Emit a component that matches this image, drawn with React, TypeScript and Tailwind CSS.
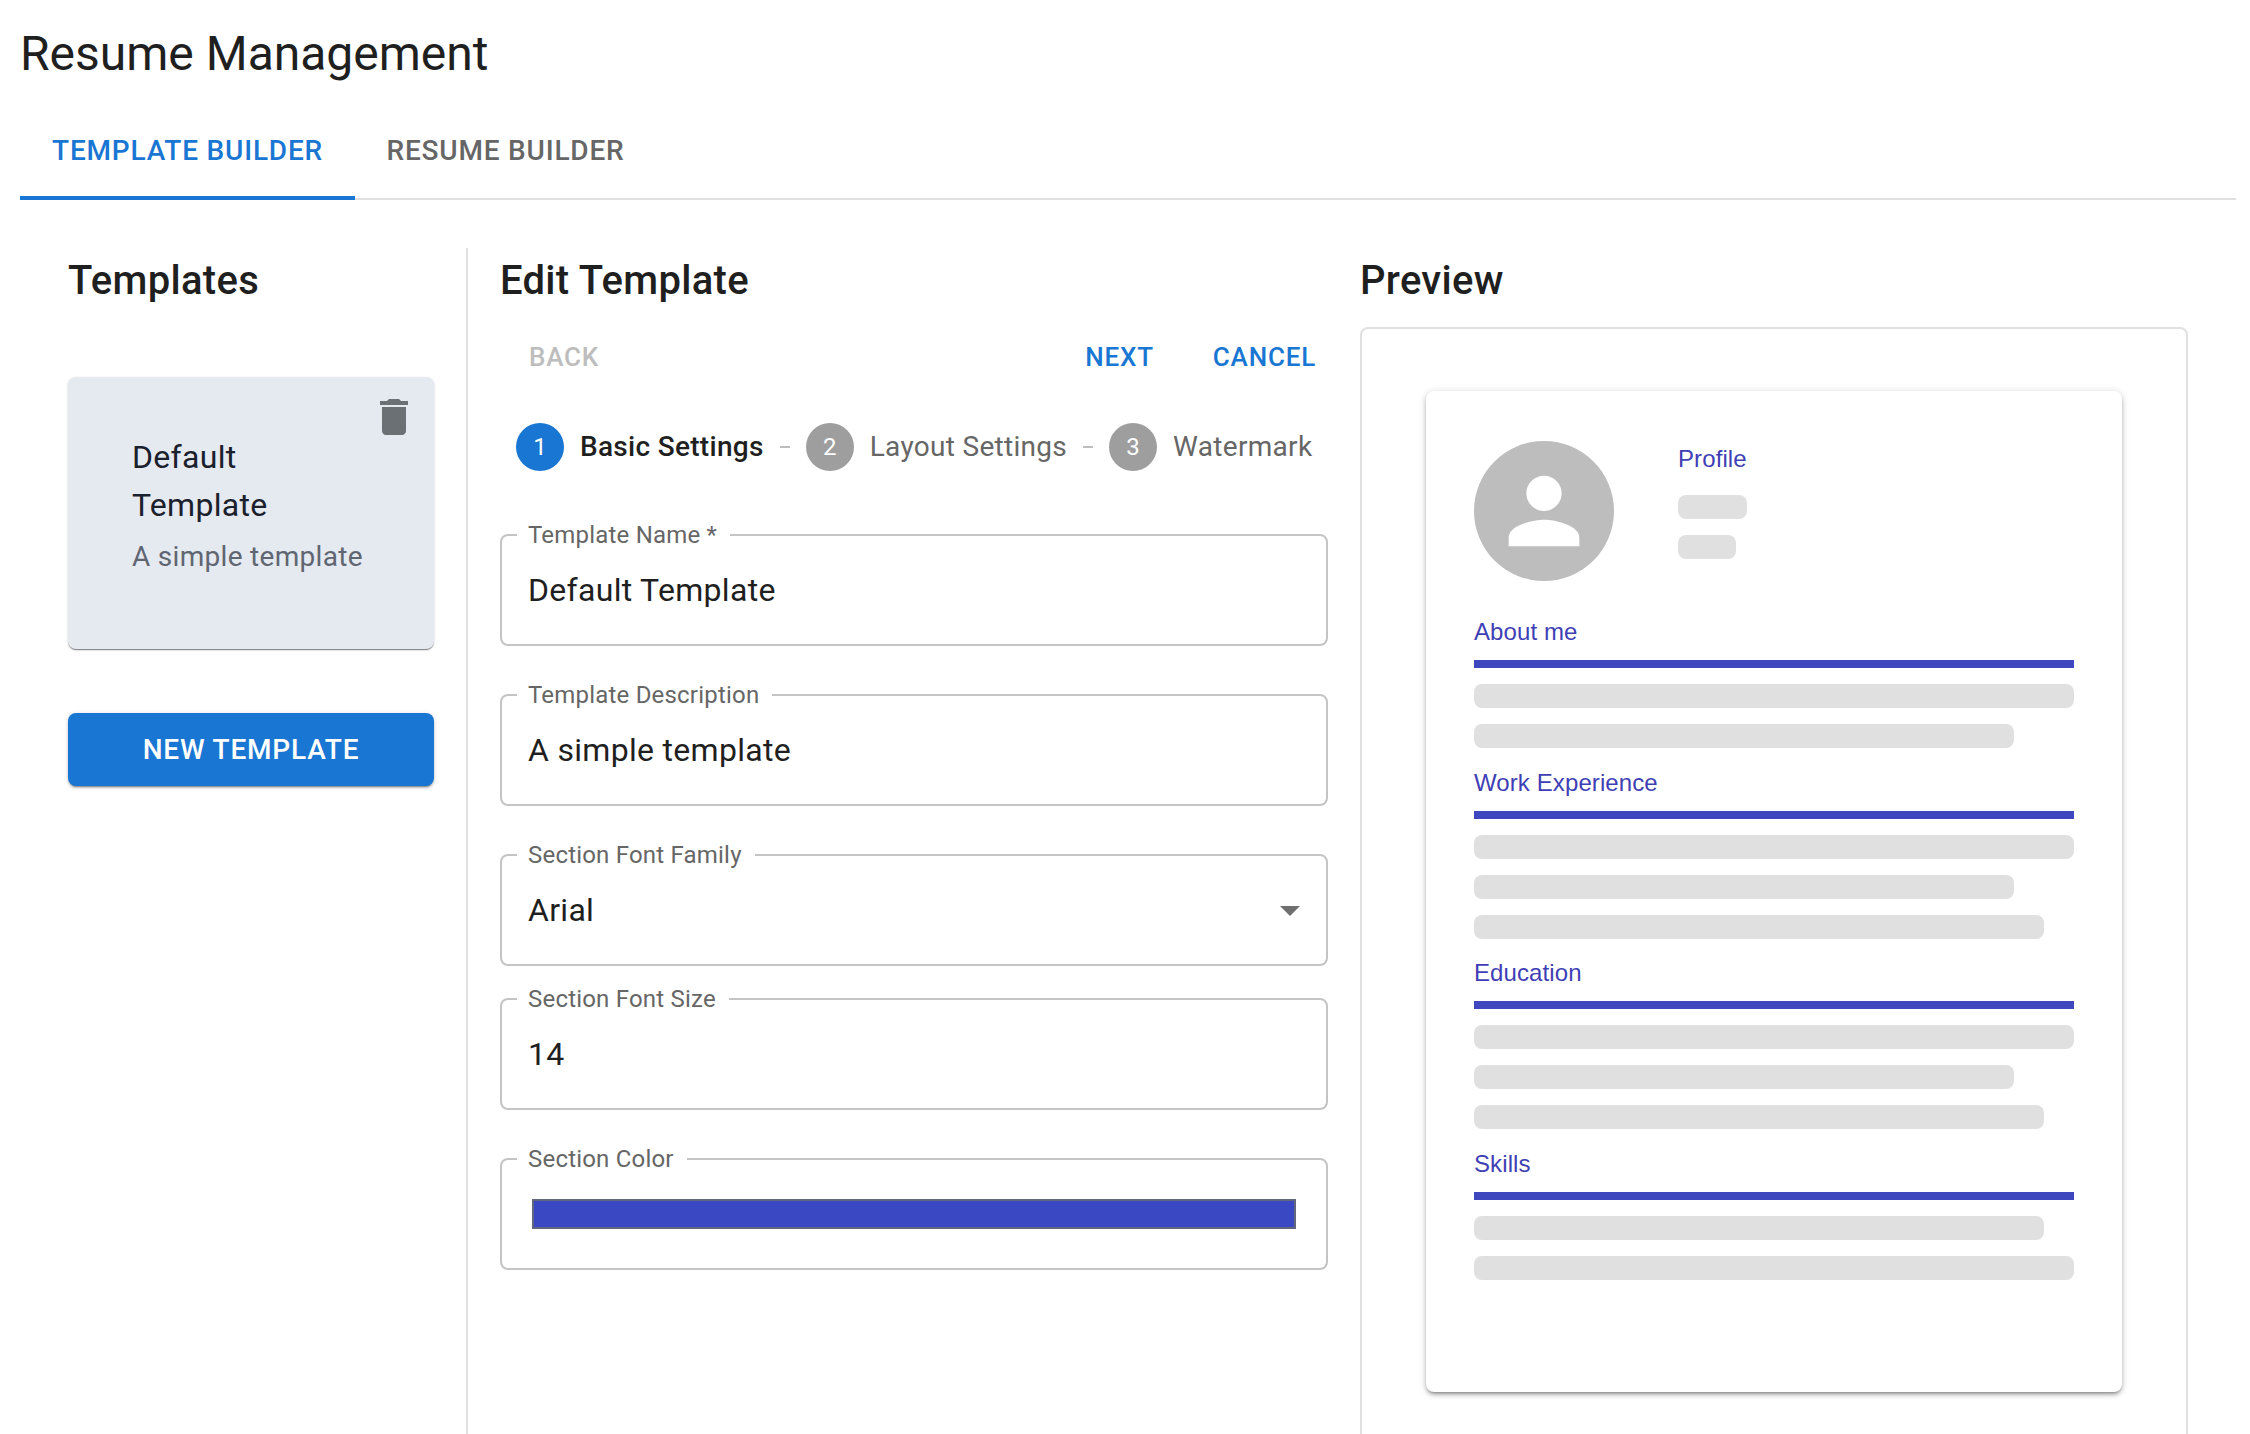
function Field({ label, children }: { label: string; children: React.ReactNode }) {
  return (
    <div className="relative h-[112px] rounded-lg border-2 border-[#c4c4c4] flex items-center pl-[26px] pr-[25px] text-[32px] tracking-[0.3px] text-[#1f1f1f]">
      <span className="absolute -top-[15px] left-[15px] h-7 bg-white pl-[11px] pr-[13px] text-[24px] leading-7 tracking-[0.2px] text-[#666666]">
        {label}
      </span>
      {children}
    </div>
  );
}

function Skeleton({ className }: { className: string }) {
  return <div className={`h-6 rounded-lg bg-[#e0e0e0] ${className}`} />;
}

function Section({ title, lines }: { title: string; lines: string[] }) {
  return (
    <div className="flex flex-col">
      <div className="h-7 text-[24px] leading-7 tracking-[0.1px] text-[#3f3fb5]">{title}</div>
      <div className="mt-[14px] h-2 bg-[#3f47bf]" />
      <div className="mt-4 flex flex-col gap-4">
        {lines.map((w, i) => (
          <Skeleton key={i} className={w} />
        ))}
      </div>
    </div>
  );
}

function Step({ n, label, active }: { n: number; label: string; active?: boolean }) {
  return (
    <div className="flex items-center gap-4">
      <div
        className={`flex h-12 w-12 items-center justify-center rounded-full text-[24px] text-white ${
          active ? "bg-[#1976d2]" : "bg-[#9e9e9e]"
        }`}
      >
        {n}
      </div>
      <span className={`text-[28px] tracking-[0.3px] ${active ? "font-medium text-[#1f1f1f]" : "text-[#666666]"}`}>
        {label}
      </span>
    </div>
  );
}

function Connector() {
  return <div className="mx-4 h-[2px] w-[10px] bg-[#bdbdbd]" />;
}

export default function App() {
  return (
    <div className="h-[1434px] w-full overflow-hidden bg-white pl-5 pr-[14px] pt-[26px] font-['Roboto',sans-serif]">
      <h1 className="h-14 text-[48px] leading-[56px] text-[#1f1f1f]">Resume Management</h1>

      <div className="mt-[21px] flex h-[97px] border-b-2 border-[#e0e0e0]">
        <div className="-mb-[2px] flex h-[97px] w-[335px] items-center justify-center border-b-4 border-[#1976d2] pt-[2px] text-[28px] font-medium tracking-[0.8px] text-[#1976d2]">
          TEMPLATE BUILDER
        </div>
        <div className="flex h-[95px] w-[301px] items-center justify-center text-[28px] font-medium tracking-[0.8px] text-[#666666]">
          RESUME BUILDER
        </div>
      </div>

      <div className="mt-[48px] flex h-[1186px]">
        <div className="w-[448px] shrink-0 border-r-2 border-[#e0e0e0] pl-12 pt-[9px]">
          <h2 className="h-12 text-[40px] font-medium leading-[48px] tracking-[0.3px] text-[#1f1f1f]">Templates</h2>
          <div className="relative mt-[72px] h-[272px] w-[366px] rounded-lg bg-[#e5e9f0] pl-[64px] pt-[56px] shadow-[0_2px_1px_-1px_rgba(0,0,0,0.3),0_1px_1px_0_rgba(0,0,0,0.2),0_1px_3px_0_rgba(0,0,0,0.14)]">
            <svg className="absolute left-[302px] top-[16px] h-12 w-12 fill-[#6b7075]" viewBox="0 0 24 24">
              <path d="M6 19c0 1.1.9 2 2 2h8c1.1 0 2-.9 2-2V7H6v12zM19 4h-3.5l-1-1h-5l-1 1H5v2h14V4z" />
            </svg>
            <div className="w-[200px] text-[32px] leading-[48px] tracking-[0.3px] text-[#1a202c]">Default Template</div>
            <div className="mt-2 text-[28px] leading-10 tracking-[0.3px] text-[#5f6672]">A simple template</div>
          </div>
          <div className="mt-[64px] flex h-[73px] w-[366px] items-center justify-center rounded-lg bg-[#1976d2] text-[28px] font-medium tracking-[0.8px] text-white shadow-[0_3px_1px_-2px_rgba(0,0,0,0.25),0_2px_2px_0_rgba(0,0,0,0.18),0_1px_5px_0_rgba(0,0,0,0.14)]">
            NEW TEMPLATE
          </div>
        </div>

        <div className="ml-[32px] w-[828px] shrink-0 pt-[9px]">
          <h2 className="h-12 text-[40px] font-medium leading-[48px] tracking-[0.3px] text-[#1f1f1f]">Edit Template</h2>
          <div className="mt-[16px] flex h-[72px] items-center justify-between pl-[29px] pr-[12px] text-[26px] font-medium tracking-[0.8px]">
            <span className="text-[#bdbdbd]">BACK</span>
            <div className="flex gap-[59px] text-[#1976d2]">
              <span>NEXT</span>
              <span>CANCEL</span>
            </div>
          </div>
          <div className="mt-[30px] flex h-12 items-center pl-[16px]">
            <Step n={1} label="Basic Settings" active />
            <Connector />
            <Step n={2} label="Layout Settings" />
            <Connector />
            <Step n={3} label="Watermark" />
          </div>
          <div className="mt-[63px] flex flex-col">
            <Field label="Template Name *">Default Template</Field>
            <div className="mt-12">
              <Field label="Template Description">A simple template</Field>
            </div>
            <div className="mt-12">
              <Field label="Section Font Family">
                <span className="flex-1">Arial</span>
                <svg className="absolute right-[12px] top-[30px] h-12 w-12 fill-[#6f6f6f]" viewBox="0 0 24 24">
                  <path d="M7 10l5 5 5-5z" />
                </svg>
              </Field>
            </div>
            <div className="mt-8">
              <Field label="Section Font Size">14</Field>
            </div>
            <div className="mt-12">
              <Field label="Section Color">
                <div className="ml-[4px] h-[30px] w-[764px] border-2 border-[#62667f] bg-[#3b48c4]" />
              </Field>
            </div>
          </div>
        </div>

        <div className="ml-[32px] w-[828px] shrink-0 pt-[9px]">
          <h2 className="h-12 text-[40px] font-medium leading-[48px] tracking-[0.3px] text-[#1f1f1f]">Preview</h2>
          <div className="mt-[22px] h-[1200px] rounded-lg border-2 border-[#e0e0e0] pl-[64px] pt-[62px]">
            <div className="h-[1001px] w-[696px] rounded-lg bg-white px-12 pt-[50px] font-['Liberation_Sans',sans-serif] shadow-[0_3px_3px_-2px_rgba(0,0,0,0.3),0_3px_4px_0_rgba(0,0,0,0.2),0_1px_8px_0_rgba(0,0,0,0.14)]">
              <div className="flex gap-16">
                <div className="flex h-[140px] w-[140px] items-center justify-center rounded-full bg-[#bdbdbd]">
                  <svg className="h-[106px] w-[106px] fill-white" viewBox="0 0 24 24">
                    <path d="M12 12c2.21 0 4-1.79 4-4s-1.79-4-4-4-4 1.79-4 4 1.79 4 4 4zm0 2c-2.67 0-8 1.34-8 4v2h16v-2c0-2.66-5.33-4-8-4z" />
                  </svg>
                </div>
                <div className="flex flex-col pt-[4px]">
                  <div className="h-7 text-[24px] leading-7 tracking-[0.1px] text-[#3f3fb5]">Profile</div>
                  <Skeleton className="mt-[22px] w-[69px]" />
                  <Skeleton className="mt-4 w-[58px]" />
                </div>
              </div>
              <div className="mt-[37px] flex flex-col gap-[20.5px]">
                <Section title="About me" lines={["w-full", "w-[90%]"]} />
                <Section title="Work Experience" lines={["w-full", "w-[90%]", "w-[95%]"]} />
                <Section title="Education" lines={["w-full", "w-[90%]", "w-[95%]"]} />
                <Section title="Skills" lines={["w-[95%]", "w-full"]} />
              </div>
            </div>
          </div>
        </div>
      </div>
    </div>
  );
}
